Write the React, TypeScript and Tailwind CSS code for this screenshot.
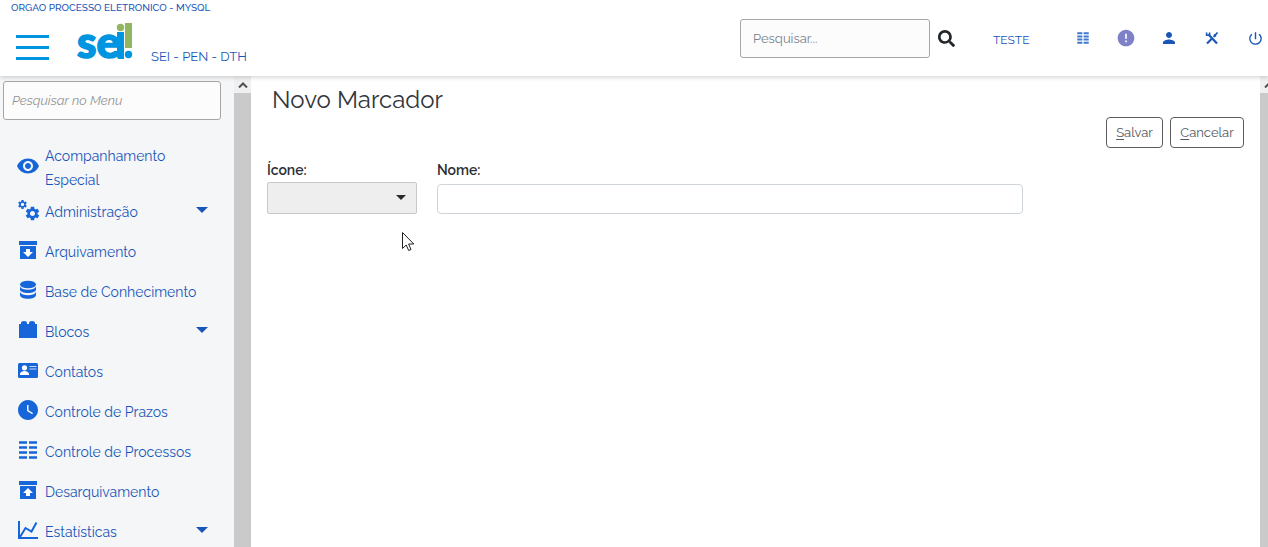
import type { ReactNode } from "react";
import { FaSearch } from "react-icons/fa";
import {
  MdError,
  MdPerson,
  MdPowerSettingsNew,
  MdSettings,
  MdVisibility,
  MdWatchLater,
} from "react-icons/md";

function GearsIcon() {
  return (
    <svg viewBox="0 0 22 22" className="size-[22px] overflow-visible" fill="currentColor">
      <MdSettings x="0" y="0" size={11} />
      <MdSettings x="7" y="6" size={17} />
    </svg>
  );
}

function BoxIcon({ up = false }: { up?: boolean }) {
  return (
    <svg viewBox="0 0 22 22" className="size-[22px]">
      <path fill="currentColor" d="M2 2h18v4H2zM3 7h16v13H3z" />
      <path
        fill="#fff"
        d={up ? "M11 9l5 5h-3v3H9v-3H6z" : "M11 18l-5-5h3v-3h4v3h3z"}
      />
    </svg>
  );
}

function DatabaseIcon() {
  return (
    <svg viewBox="0 0 22 22" className="size-[22px]" fill="currentColor">
      <ellipse cx="11" cy="5.500" rx="8" ry="3.800" />
      <path d="M3 7.600c1 2.200 4.200 3.200 8 3.200s7-1 8-3.200v2.900c0 2.100-3.600 3.600-8 3.600s-8-1.500-8-3.600z" />
      <path d="M3 13c1 2.200 4.200 3.200 8 3.200s7-1 8-3.200v3c0 2.200-3.600 3.800-8 3.800S3 18.200 3 16z" />
    </svg>
  );
}

function BlockIcon() {
  return (
    <svg viewBox="0 0 22 22" className="size-[22px]" fill="currentColor">
      <path d="M2 5h2V4q0-2 3-2t3 2v1h2V4q0-2 3-2t3 2v1h2v14H2z" />
    </svg>
  );
}

function ContactIcon() {
  return (
    <svg viewBox="0 0 22 22" className="size-[22px]">
      <rect x="1" y="4" width="20" height="15" rx="1.500" fill="currentColor" />
      <circle cx="7.500" cy="8.800" r="2.600" fill="#fff" />
      <path d="M3 16v-1c0-2 3-3 4.500-3s4.500 1 4.500 3v1z" fill="#fff" />
      <path d="M12.500 7.500h7M12.500 10h7" stroke="#c7d8f5" strokeWidth="1.200" />
    </svg>
  );
}

function ListIcon({ small = false }: { small?: boolean }) {
  return (
    <svg
      viewBox="0 0 22 22"
      className={small ? "size-[14px]" : "size-[22px]"}
      stroke="currentColor"
      strokeWidth={small ? "3.200" : "2.500"}
    >
      <path d="M2 3.500h8M12 3.500h8M2 8.500h8M12 8.500h8M2 13.500h8M12 13.500h8M2 18.500h8M12 18.500h8" />
    </svg>
  );
}

function ChartIcon() {
  return (
    <svg viewBox="0 0 22 22" className="size-[22px]" fill="none" stroke="currentColor">
      <path d="M2 2v17h19" strokeWidth="2" />
      <path d="M3 18l5.500-9 6 3.500 5-9" strokeWidth="2" />
    </svg>
  );
}

function ToolsIcon() {
  return (
    <svg viewBox="0 0 16 16" className="size-4" fill="none" stroke="currentColor">
      <path d="M4.500 4.500l8.500 9" strokeWidth="2.200" />
      <path d="M2.600 2.600v2.600h3V2.400" strokeWidth="1.600" />
      <path d="M3 13.500l5-5" strokeWidth="2.200" />
      <path d="M9.500 7l4-4.500" strokeWidth="1.800" />
      <path d="M10 4.500l2 2" strokeWidth="1.500" />
    </svg>
  );
}

function Caret() {
  return (
    <svg viewBox="0 0 12 6" className="h-[6px] w-3" fill="currentColor">
      <path d="M0 0h12L6 6z" />
    </svg>
  );
}

function Logo() {
  return (
    <svg viewBox="0 0 56 40" className="h-10 w-14 overflow-visible" role="img" aria-label="sei!">
      <text
        x="0"
        y="36"
        fontSize="44"
        fontWeight="900"
        fill="#0095e0"
        stroke="#0095e0"
        strokeWidth="1.500"
        className="font-['Lato',sans-serif]"
      >
        se
      </text>
      <path d="M40 10h7v27h-5q-2 0-2-3z" fill="#0095e0" />
      <circle cx="43.500" cy="5.500" r="3.700" fill="#92b560" />
      <rect x="48" y="1" width="7" height="25" fill="#92b560" />
      <circle cx="51.500" cy="32.500" r="3.700" fill="#0095e0" />
    </svg>
  );
}

function ScrollRail({ className }: { className: string }) {
  return (
    <div className={`shrink-0 overflow-hidden bg-[#cacaca] ${className}`} aria-hidden="true">
      <div className="flex h-[17px] w-[17px] items-center justify-center bg-[#f0f0f0] text-[#505050]">
        <svg viewBox="0 0 10 6" className="h-[6px] w-[10px]" fill="none" stroke="currentColor">
          <path d="M1 5.500l4-4 4 4" strokeWidth="2" />
        </svg>
      </div>
    </div>
  );
}

type MenuItem = { label: string; icon: ReactNode; expandable?: boolean };

const menu: MenuItem[] = [
  { label: "Acompanhamento Especial", icon: <MdVisibility size={24} /> },
  { label: "Administração", icon: <GearsIcon />, expandable: true },
  { label: "Arquivamento", icon: <BoxIcon /> },
  { label: "Base de Conhecimento", icon: <DatabaseIcon /> },
  { label: "Blocos", icon: <BlockIcon />, expandable: true },
  { label: "Contatos", icon: <ContactIcon /> },
  { label: "Controle de Prazos", icon: <MdWatchLater size={24} /> },
  { label: "Controle de Processos", icon: <ListIcon /> },
  { label: "Desarquivamento", icon: <BoxIcon up /> },
  { label: "Estatísticas", icon: <ChartIcon />, expandable: true },
];

const actions = [
  { label: "Controle de Processos", icon: <ListIcon small />, color: "text-[#3f78cd]" },
  { label: "Avisos", icon: <MdError size={20} />, color: "text-[#7e80c8]" },
  { label: "Usuário", icon: <MdPerson size={18} />, color: "text-[#1a56b8]" },
  { label: "Configurações", icon: <ToolsIcon />, color: "text-[#1a56b8]" },
  { label: "Sair", icon: <MdPowerSettingsNew size={17} />, color: "text-[#1a56b8]" },
];

function Header() {
  return (
    <header className="relative z-10 flex h-[76px] shrink-0 justify-between bg-white text-[#1a56b8] shadow-[0_1px_5px_rgba(0,0,0,0.2)]">
      <div>
        <p className="pl-[11px] pt-[2px] text-[10px] font-medium leading-3">
          ORGAO PROCESSO ELETRONICO - MYSQL
        </p>
        <div className="flex items-start pl-4 pt-2">
          <button
            type="button"
            aria-label="Menu"
            className="mt-[13px] flex w-[33px] flex-col gap-2"
          >
            <span className="h-[3px] w-full bg-[#0095e0]" />
            <span className="h-[3px] w-full bg-[#0095e0]" />
            <span className="h-[3px] w-full bg-[#0095e0]" />
          </button>
          <div className="ml-7">
            <Logo />
          </div>
          <span className="ml-[18px] mt-[27px] text-[13px] leading-4">SEI - PEN - DTH</span>
        </div>
      </div>
      <div className="flex items-center pr-[3px]">
        <input
          type="text"
          aria-label="Pesquisar"
          placeholder="Pesquisar..."
          className="h-[39px] w-[190px] rounded-[3px] border border-[#a6a6a6] bg-[#fcfcfc] px-3 text-[13px] text-[#333] placeholder:text-[#7a828c]"
        />
        <button type="button" aria-label="Buscar" className="ml-2 text-[#22272c]">
          <FaSearch size={17} />
        </button>
        <span className="ml-[38px] mt-1 w-9 text-[12px] leading-4">TESTE</span>
        <nav className="ml-[44px] flex items-center gap-[23px]">
          {actions.map((a) => (
            <button
              key={a.label}
              type="button"
              aria-label={a.label}
              className={`flex size-5 items-center justify-center ${a.color}`}
            >
              {a.icon}
            </button>
          ))}
        </nav>
      </div>
    </header>
  );
}

function Sidebar() {
  return (
    <aside className="w-[234px] shrink-0 overflow-hidden bg-[#f4f6f8] pl-[3px] pr-[13px] pt-[5px]">
      <input
        type="text"
        aria-label="Pesquisar no Menu"
        placeholder="Pesquisar no Menu"
        className="h-[39px] w-full rounded-[3px] border border-[#a6a6a6] bg-[#fcfcfc] px-2 text-[13px] text-[#333] placeholder:italic placeholder:text-[#949494]"
      />
      <ul className="mt-6 pl-[13px] pr-[13px] text-[#1a56b8]">
        {menu.map((m) => (
          <li key={m.label}>
            <a href="#" className="flex min-h-10 items-center text-[14px] leading-6">
              <span className="-mt-1 mr-[5px] flex w-6 shrink-0 justify-center text-[#1766d9]">
                {m.icon}
              </span>
              <span className="flex-1">{m.label}</span>
              {m.expandable && (
                <span className="-mt-1">
                  <Caret />
                </span>
              )}
            </a>
          </li>
        ))}
      </ul>
    </aside>
  );
}

function Main() {
  const button =
    "h-[31px] rounded-[4px] border border-[#5c5c5c] bg-white text-[13px] text-[#55595f]";
  return (
    <main className="relative min-w-0 flex-1 bg-white px-4 pt-2">
      <h1 className="pl-[5px] text-[24px] leading-8 text-[#32363d]">Novo Marcador</h1>
      <div className="mt-[1px] flex justify-end gap-[7px]">
        <button type="button" className={`${button} w-[57px]`}>
          <span className="underline underline-offset-2">S</span>alvar
        </button>
        <button type="button" className={`${button} w-[74px]`}>
          <span className="underline underline-offset-2">C</span>ancelar
        </button>
      </div>
      <form className="mt-3 flex gap-5 text-[14px] font-semibold leading-5 text-[#2c3035]">
        <div className="w-[150px] shrink-0">
          <label htmlFor="icone" className="block">
            Ícone:
          </label>
          <div className="relative mt-[2px]">
            <select
              id="icone"
              className="block h-8 w-full appearance-none rounded-[2px] border border-[#c8c8c8] bg-[#eeeeee] px-2"
            />
            <span className="pointer-events-none absolute right-[11px] top-[13px] text-[#2b2b2b]">
              <svg viewBox="0 0 10 5" className="block h-[5px] w-[10px]" fill="currentColor">
                <path d="M0 0h10L5 5z" />
              </svg>
            </span>
          </div>
        </div>
        <div className="w-3/5">
          <label htmlFor="nome" className="block">
            Nome:
          </label>
          <input
            id="nome"
            type="text"
            className="mt-1 block h-[30px] w-full rounded-[4px] border border-[#ced4da] bg-white px-2 font-normal"
          />
        </div>
      </form>
      <svg
        viewBox="0 0 13 20"
        className="pointer-events-none absolute left-[151px] top-[156px] h-5 w-[13px]"
        fill="#fff"
        stroke="#222"
        aria-hidden="true"
      >
        <path d="M.5.5v16l3.700-3.500 2.500 5.500 2.300-1-2.400-5.500h5.200z" />
      </svg>
    </main>
  );
}

export default function App() {
  return (
    <div className="flex h-screen flex-col overflow-hidden bg-white font-['Raleway','Lato',sans-serif]">
      <Header />
      <div className="flex min-h-0 flex-1">
        <Sidebar />
        <ScrollRail className="w-[17px]" />
        <Main />
        <ScrollRail className="w-2" />
      </div>
    </div>
  );
}
